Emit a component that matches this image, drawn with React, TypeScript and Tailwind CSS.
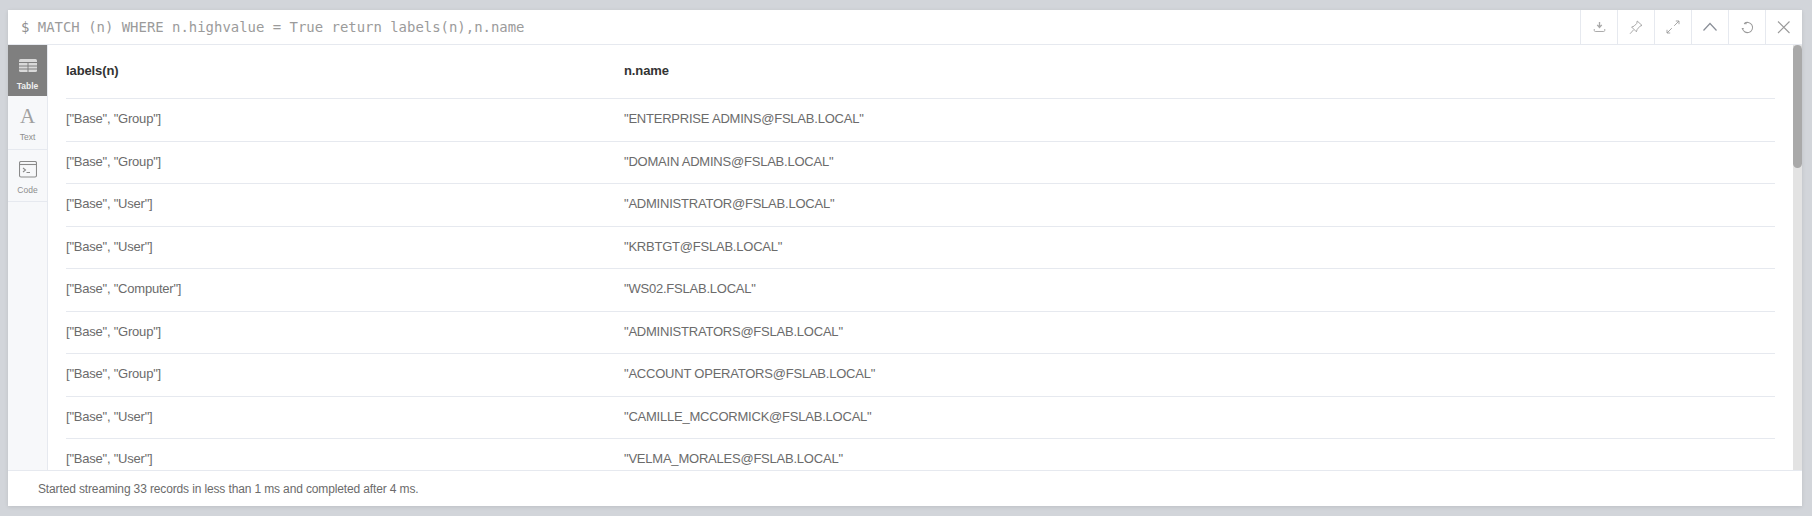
const rows = [
  { labels: '["Base", "Group"]', name: '"ENTERPRISE ADMINS@FSLAB.LOCAL"' },
  { labels: '["Base", "Group"]', name: '"DOMAIN ADMINS@FSLAB.LOCAL"' },
  { labels: '["Base", "User"]', name: '"ADMINISTRATOR@FSLAB.LOCAL"' },
  { labels: '["Base", "User"]', name: '"KRBTGT@FSLAB.LOCAL"' },
  { labels: '["Base", "Computer"]', name: '"WS02.FSLAB.LOCAL"' },
  { labels: '["Base", "Group"]', name: '"ADMINISTRATORS@FSLAB.LOCAL"' },
  { labels: '["Base", "Group"]', name: '"ACCOUNT OPERATORS@FSLAB.LOCAL"' },
  { labels: '["Base", "User"]', name: '"CAMILLE_MCCORMICK@FSLAB.LOCAL"' },
  { labels: '["Base", "User"]', name: '"VELMA_MORALES@FSLAB.LOCAL"' },
];

const toolbar = [
  {
    size: 15,
    icon: (
      <g fill="none" stroke="#a8a8a8" strokeWidth="1.3">
        <path d="M10 2.500v7M7 6.500l3 3.500 3-3.500" strokeWidth="1.800" />
        <path d="M3 12v2c0 .8.6 1.300 1.300 1.300h11.400c.7 0 1.300-.5 1.300-1.300v-2" />
      </g>
    ),
  },
  {
    size: 16,
    icon: (
      <g fill="none" stroke="#9e9e9e" strokeWidth="1.100">
        <path d="M11.500 2.500l6 5.500-2.500 1-3.500 4-1 3-6-6 3-1 3.500-3.500z" />
        <path d="M7 13.500l-4.500 5" />
      </g>
    ),
  },
  {
    size: 16,
    icon: (
      <g fill="none" stroke="#9a9a9a" strokeWidth="1.100">
        <path d="M11.500 8.500l6-6M13.500 2.500h4v4" />
        <path d="M8.500 11.500l-6 6M2.500 13.500v4h4" />
      </g>
    ),
  },
  {
    size: 20,
    icon: <path d="M3.500 13.500L10 6.500l6.500 7" fill="none" stroke="#8a8f98" strokeWidth="1.200" />,
  },
  {
    size: 17,
    icon: (
      <g fill="none" stroke="#9a9a9a" strokeWidth="1.200">
        <path d="M6 5.500a6 6 0 1 1-2 5" />
        <path d="M2.800 10.500l1.800 2 1.300-2z" fill="#9a9a9a" stroke="none" />
        <path d="M6 5.500h3" />
      </g>
    ),
  },
  {
    size: 20,
    icon: <path d="M4 4.500l11.500 11.500M15.500 4.500L4 16" fill="none" stroke="#9a9a9a" strokeWidth="1.100" />,
  },
];

function TableIcon() {
  return (
    <svg width="18" height="13" viewBox="0 0 18 13" fill="none">
      <rect x="0" y="0" width="18" height="13" rx="1.500" fill="#d9d9d9" />
      <path d="M0 3.500h18M0 7h18M0 10h18M9 3.500v9.500" stroke="#7f7f7f" strokeWidth="1" />
    </svg>
  );
}

function CodeIcon() {
  return (
    <svg width="18" height="17" viewBox="0 0 18 17" fill="none" stroke="#8a8a8a" strokeWidth="1.100">
      <rect x="0.500" y="0.500" width="17" height="15.500" rx="1.500" />
      <path d="M0.500 3.500h17" />
      <path d="M4 7l2.500 2L4 11M7.500 11.500h3.500" />
    </svg>
  );
}

export default function App() {
  return (
    <div className="h-[516px] w-[1812px] bg-[#d2d5da] pt-[10px] pl-2 font-['Liberation_Sans',Arial,sans-serif]">
      <div className="flex h-[496px] w-[1794px] flex-col bg-white shadow-[0_1px_4px_rgba(0,0,0,0.1)]">
        {/* Header */}
        <div className="flex h-[35px] shrink-0 items-stretch border-b border-[#e6e9ef]">
          <div className="flex-1 pt-[8px] pl-[13px] font-['DejaVu_Sans_Mono',monospace] text-[13.950px] leading-[19px] whitespace-pre text-[#9b9b9b]">
            <span className="text-[#8f8f8f]">$ </span>MATCH (n) WHERE n.highvalue = True return labels(n),n.name
          </div>
          <div className="flex">
            {toolbar.map((item, i) => (
              <div key={i} className="flex w-[37px] items-center justify-center border-l border-[#e6e9ef]">
                <svg width={item.size} height={item.size} viewBox="0 0 20 20">
                  {item.icon}
                </svg>
              </div>
            ))}
          </div>
        </div>

        {/* Body */}
        <div className="flex min-h-0 flex-1">
          {/* Sidebar */}
          <div className="flex w-[40px] shrink-0 flex-col border-r border-[#e6e9ef] bg-[#f7f8fa]">
            <div className="flex h-[51px] flex-col items-center bg-[#7f7f7f] pt-[14px] text-[8.500px] font-bold text-white">
              <TableIcon />
              <span className="mt-[9px] leading-[10px] text-[#efefef]">Table</span>
            </div>
            <div className="flex h-[54px] flex-col items-center border-b border-[#e6e9ef] pt-[7px] text-[#8e8e8e]">
              <span className="font-['Liberation_Serif',serif] text-[21px] leading-[27px] font-normal text-[#a0a0a0]">A</span>
              <span className="mt-[2px] text-[8.500px] leading-[10px]">Text</span>
            </div>
            <div className="flex h-[52px] flex-col items-center border-b border-[#e6e9ef] pt-[11px] text-[#8e8e8e]">
              <CodeIcon />
              <span className="mt-[7px] text-[8.500px] leading-[10px]">Code</span>
            </div>
          </div>

          {/* Table */}
          <div className="min-w-0 flex-1 overflow-hidden pr-[18px] pl-[18px]">
            <div className="flex h-[54px] items-center border-b border-[#e6e9ef] pb-[2px] text-[13px] font-bold tracking-[-0.1px] text-[#333]">
              <div className="w-[558px]">labels(n)</div>
              <div>n.name</div>
            </div>
            {rows.map((row, i) => (
              <div key={i} className="flex h-[42.500px] shrink-0 items-center border-b border-[#e6e9ef] pb-[2px] text-[13px] tracking-[-0.22px] text-[#6b6b6b]">
                <div className="w-[558px]">{row.labels}</div>
                <div>{row.name}</div>
              </div>
            ))}
          </div>

          {/* Scrollbar */}
          <div className="w-[9px] shrink-0 bg-[#e3e3e3]">
            <div className="h-[123px] rounded-[5px] bg-[#a9a9a9]" />
          </div>
        </div>

        {/* Footer */}
        <div className="flex h-[36px] shrink-0 items-center border-t border-[#e6e9ef] pl-[30px] text-[12px] tracking-[-0.135px] text-[#6b6b6b]">
          Started streaming 33 records in less than 1 ms and completed after 4 ms.
        </div>
      </div>
    </div>
  );
}
